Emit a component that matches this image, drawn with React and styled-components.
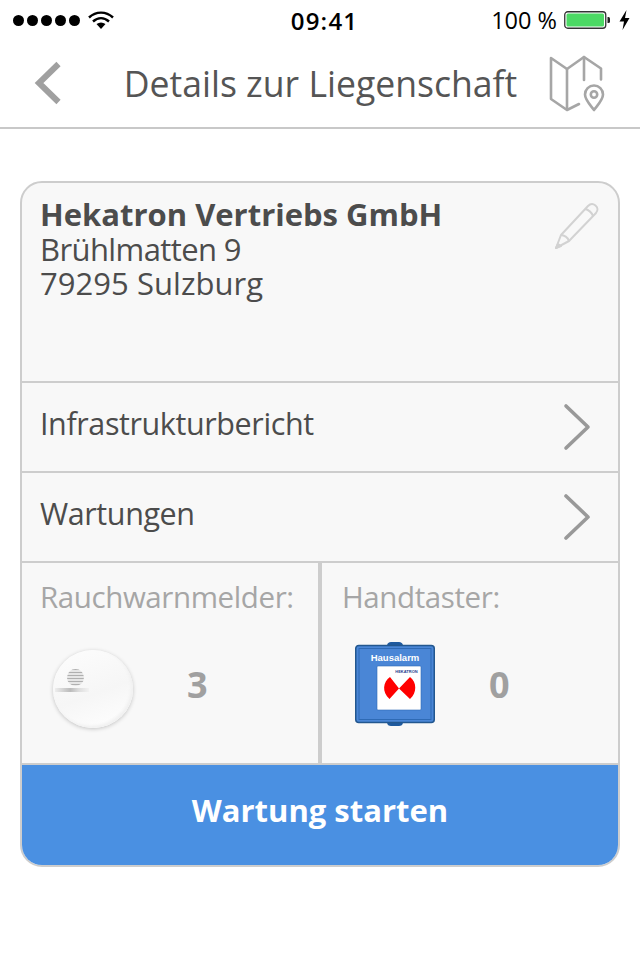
import React from 'react'
import styled, { createGlobalStyle } from 'styled-components'

const GlobalStyle = createGlobalStyle`
  html, body { margin: 0; padding: 0; background: #fff; }
  body { font-family: "Open Sans", "Noto Sans", sans-serif; }
`

const Page = styled.div`
  width: 640px;
  height: 960px;
  overflow: hidden;
  background: #fff;
`

const StatusBar = styled.div`
  height: 40px;
  display: grid;
  grid-template-columns: 1fr auto 1fr;
  align-items: center;
  padding: 0 10px 0 13px;
  color: #000;
  font-size: 23px;
`

const StatusLeft = styled.div`
  display: flex;
  align-items: center;
  gap: 8px;
`

const Dots = styled.div`
  display: flex;
  gap: 3px;
`

const Dot = styled.span`
  width: 11px;
  height: 11px;
  border-radius: 50%;
  background: #000;
`

const Clock = styled.div`
  font-weight: 600;
  font-size: 24px;
  letter-spacing: 1.2px;
  margin-left: 6px;
`

const StatusRight = styled.div`
  display: flex;
  align-items: center;
  justify-content: flex-end;
  gap: 9px;
`

const Percent = styled.span`
  font-size: 23.5px;
  margin-right: -2px;
`

const BatteryGroup = styled.div`
  display: flex;
  align-items: center;
  gap: 9px;
`

const Nav = styled.div`
  height: 89px;
  box-sizing: border-box;
  border-bottom: 2px solid #c8c8c8;
  display: flex;
  align-items: center;
  padding: 0 33px 2px 33px;
`

const NavTitle = styled.div`
  flex: 1;
  text-align: center;
  font-size: 35.6px;
  color: #555;
  white-space: nowrap;
  margin-left: 30px;
`

const Card = styled.div`
  margin: 52px 20px 0;
  height: 686px;
  box-sizing: border-box;
  border: 2px solid #cdcdcd;
  border-radius: 22px;
  background: #f8f8f8;
  overflow: hidden;
  display: flex;
  flex-direction: column;
`

const Address = styled.div`
  height: 198px;
  box-sizing: border-box;
  padding: 14px 18px 0 18px;
  display: flex;
  justify-content: space-between;
  align-items: flex-start;
  color: #4c4c4c;
  font-size: 31px;
  line-height: 34.5px;
`

const Name = styled.div`
  font-weight: 700;
`

const Plain = styled.div`
  letter-spacing: ${(p) => p.$tracking}px;
`

const PencilSlot = styled.div`
  margin-top: 5px;
  line-height: 0;
`

const Row = styled.div`
  height: 90px;
  box-sizing: border-box;
  border-top: 2px solid #cdcdcd;
  display: flex;
  align-items: center;
  justify-content: space-between;
  padding: 0 27px 0 18px;
  color: #4c4c4c;
  font-size: 30.5px;
  letter-spacing: -0.4px;
`

const RowLabel = styled.span`
  margin-bottom: 8px;
`

const Tiles = styled.div`
  height: 202px;
  box-sizing: border-box;
  border-top: 2px solid #cdcdcd;
  display: grid;
  grid-template-columns: 300px 1fr;
`

const Tile = styled.div`
  box-sizing: border-box;
  padding: 14px 0 0 ${(p) => p.$left}px;
  border-right: ${(p) => (p.$divided ? '4px solid #cdcdcd' : 'none')};
`

const TileLabel = styled.div`
  color: #a6a6a6;
  font-size: 29.5px;
  letter-spacing: -0.4px;
  line-height: 40px;
`

const TileBody = styled.div`
  display: flex;
  align-items: center;
  margin-top: 22px;
  height: 90px;
`

const Count = styled.div`
  color: #a0a0a0;
  font-size: 36px;
  font-weight: 700;
  margin-left: 54px;
`

const Detector = styled.div`
  position: relative;
  flex: none;
  width: 80px;
  height: 78px;
  margin: 10px 0 0 13px;
  border-radius: 50%;
  background: linear-gradient(160deg, #fdfdfd 0%, #f6f6f6 55%, #fff 100%);
  box-shadow: 0 1px 4px rgba(0, 0, 0, 0.22), inset -2px -2px 3px #f0f0f0;
`

const Dome = styled.div`
  position: absolute;
  left: 14px;
  top: 19px;
  width: 17px;
  height: 17px;
  border-radius: 50%;
  background: repeating-linear-gradient(#b0b0b0 0 1px, #e6e6e6 1px 3px);
`

const Brand = styled.div`
  position: absolute;
  left: 2px;
  top: 38px;
  width: 34px;
  height: 4px;
  background: linear-gradient(90deg, #eee, #bbb 45%, #ddd 70%, #f2f2f2);
`

const CallPoint = styled.div`
  flex: none;
  margin-left: 13px;
  line-height: 0;
`

const StartButton = styled.div`
  flex: 1;
  border-top: 2px solid #cdcdcd;
  background: #4a90e2;
  color: #fff;
  font-size: 31px;
  font-weight: 700;
  display: flex;
  align-items: center;
  justify-content: center;
  padding-bottom: 10px;
`

const Wifi = () => (
  <svg width="26" height="20" viewBox="0 0 26 20">
    <path d="M1 7.5C8 1 18 1 25 7.5" fill="none" stroke="#000" strokeWidth="2.4" />
    <path d="M5 11.5C10 7 16 7 21 11.5" fill="none" stroke="#000" strokeWidth="2.4" />
    <path d="M8.5 14C11.5 12 14.5 12 17.5 14L13 19Z" fill="#000" />
  </svg>
)

const Battery = () => (
  <svg width="46" height="20" viewBox="0 0 46 20">
    <rect x="0.75" y="1.75" width="41" height="16.5" rx="3" fill="none" stroke="#333" strokeWidth="1.3" />
    <rect x="2.5" y="3.5" width="37.5" height="13" rx="1.5" fill="#4cd964" />
    <path d="M43.5 7h1a1.5 1.5 0 0 1 1.5 1.5v3a1.5 1.5 0 0 1-1.5 1.5h-1z" fill="#222" />
  </svg>
)

const Bolt = () => (
  <svg width="11" height="20" viewBox="0 0 11 20">
    <path d="M7.5 0 0.5 11.5H5L3.5 20 10.5 8H6Z" fill="#000" />
  </svg>
)

const BackIcon = () => (
  <svg width="29" height="44" viewBox="0 0 29 44">
    <path d="M25.5 3 6 22l19.5 19" fill="none" stroke="#a0a0a0" strokeWidth="6" />
  </svg>
)

const MapIcon = () => (
  <svg width="58" height="58" viewBox="0 0 58 58">
    <g fill="none" stroke="#a6a6a6" strokeWidth="2.6" strokeLinejoin="round" strokeLinecap="round">
      <path d="M30 50 18 56 2 45V4l16 11L35 3l17 11.5v11" />
      <path d="M18 15v40" />
      <path d="M35 3v23" />
      <path d="M45 56c-5-6.500-9-10.500-9-15.500a9 9 0 0 1 18 0c0 5-4 9-9 15.500z" />
      <circle cx="45" cy="40.5" r="3.2" />
    </g>
  </svg>
)

const PencilIcon = () => (
  <svg width="46" height="48" viewBox="0 0 46 48">
    <g fill="none" stroke="#d2d2d2" strokeWidth="2" strokeLinejoin="round">
      <path d="M2 46 7 33 34 4c2-2 5-2.500 7.500-.5s2.500 5 .5 7.500L15 39Z" />
      <path d="M7 33c3 0 7 2.500 8 6" />
      <path d="M31 7c3 .5 7 3.500 8 7" />
      <path d="M2 46l5-2-3-2z" fill="#d2d2d2" />
    </g>
  </svg>
)

const ChevronIcon = () => (
  <svg width="28" height="48" viewBox="0 0 28 48">
    <path d="M3 3l22 21L3 45" fill="none" stroke="#999" strokeWidth="3.6" strokeLinecap="round" strokeLinejoin="round" />
  </svg>
)

const ManualCallPoint = () => (
  <svg width="80" height="84" viewBox="0 0 80 84">
    <path d="M32 4c0-3 2-4 4-4h8c2 0 4 1 4 4zM32 80c0 3 2 4 4 4h8c2 0 4-1 4-4z" fill="#1f5a9e" />
    <rect x="0.75" y="3.5" width="78.5" height="77" rx="3" fill="#4a86d6" stroke="#23578f" strokeWidth="1.5" />
    <rect x="4" y="6.5" width="72" height="71" fill="none" stroke="#2e6ab5" strokeWidth="1" />
    <text x="40" y="18.5" textAnchor="middle" fontFamily="Liberation Sans, sans-serif" fontWeight="700" fontSize="9.5" fill="#fff">Hausalarm</text>
    <rect x="22" y="24" width="44" height="44" rx="1" fill="#fff" stroke="#2e6ab5" strokeWidth="0.6" />
    <text x="51.5" y="31" textAnchor="middle" fontFamily="Liberation Sans, sans-serif" fontWeight="700" fontSize="4" fill="#1f3f8f">HEKATRON</text>
    <path d="M44 46.5 35 35c-7 5-8.500 15-.5 22zM44 46.5 55 35c7 5 7 16 0 22z" fill="#f00" />
  </svg>
)

const App = () => {
  return (
    <Page>
      <GlobalStyle />
      <StatusBar>
        <StatusLeft>
          <Dots>
            {[0, 1, 2, 3, 4].map((i) => (
              <Dot key={i} />
            ))}
          </Dots>
          <Wifi />
        </StatusLeft>
        <Clock>09:41</Clock>
        <StatusRight>
          <Percent>100 %</Percent>
          <BatteryGroup>
            <Battery />
            <Bolt />
          </BatteryGroup>
        </StatusRight>
      </StatusBar>
      <Nav>
        <BackIcon />
        <NavTitle>Details zur Liegenschaft</NavTitle>
        <MapIcon />
      </Nav>
      <Card>
        <Address>
          <div>
            <Name>Hekatron Vertriebs GmbH</Name>
            <Plain $tracking={-0.6}>Brühlmatten 9</Plain>
            <Plain $tracking={0.05}>79295 Sulzburg</Plain>
          </div>
          <PencilSlot>
            <PencilIcon />
          </PencilSlot>
        </Address>
        <Row>
          <RowLabel>Infrastrukturbericht</RowLabel>
          <ChevronIcon />
        </Row>
        <Row>
          <RowLabel>Wartungen</RowLabel>
          <ChevronIcon />
        </Row>
        <Tiles>
          <Tile $left={18} $divided>
            <TileLabel>Rauchwarnmelder:</TileLabel>
            <TileBody>
              <Detector>
                <Dome />
                <Brand />
              </Detector>
              <Count>3</Count>
            </TileBody>
          </Tile>
          <Tile $left={20}>
            <TileLabel>Handtaster:</TileLabel>
            <TileBody>
              <CallPoint>
                <ManualCallPoint />
              </CallPoint>
              <Count>0</Count>
            </TileBody>
          </Tile>
        </Tiles>
        <StartButton>Wartung starten</StartButton>
      </Card>
    </Page>
  )
}

export default App
